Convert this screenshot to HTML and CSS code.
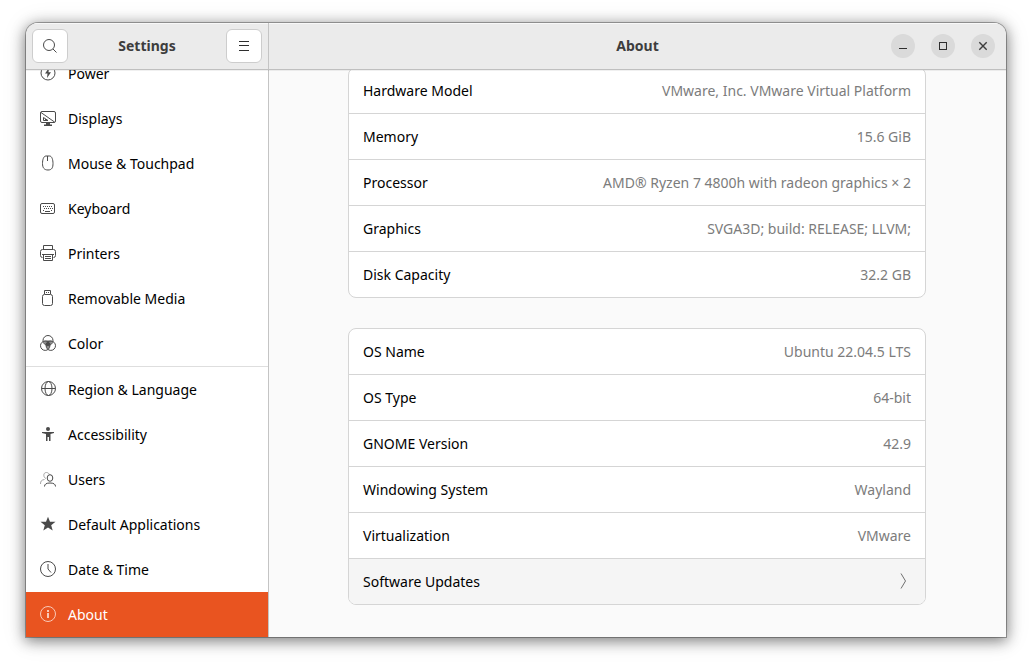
FILE: index.html
```html
<!DOCTYPE html>
<html lang="en">
<head>
<meta charset="utf-8">
<meta name="viewport" content="width=device-width, initial-scale=1">
<title>Settings – About</title>
<link rel="stylesheet" href="styles.css">
</head>
<body>
<div class="window">
  <header class="headerbar">
    <div class="headerbar-side">
      <button class="tool-button" type="button" aria-label="Search">
        <svg class="icon" viewBox="0 0 16 16"><circle cx="7" cy="7" r="5.500"/><path d="M11 11l3.500 3.500"/></svg>
      </button>
      <h2 class="title">Settings</h2>
      <button class="tool-button" type="button" aria-label="Menu">
        <svg class="icon crisp" viewBox="0 0 16 16"><path d="M3 3.500h10M3 7.500h10M3 12.500h10"/></svg>
      </button>
    </div>
    <div class="headerbar-main">
      <h1 class="title title-main">About</h1>
      <div class="window-controls">
        <button class="control" type="button" aria-label="Minimize">
          <svg class="icon crisp" viewBox="0 0 16 16"><path d="M4 10.500h8"/></svg>
        </button>
        <button class="control" type="button" aria-label="Maximize">
          <svg class="icon crisp" viewBox="0 0 16 16"><path d="M4.500 4.500h7v7h-7z"/></svg>
        </button>
        <button class="control" type="button" aria-label="Close">
          <svg class="icon close-icon" viewBox="0 0 16 16"><path d="M4.300 4.300l7.400 7.400M11.700 4.300l-7.400 7.400"/></svg>
        </button>
      </div>
    </div>
  </header>
  <div class="body">
    <nav class="sidebar" aria-label="Settings panels">
      <a class="nav-item" href="#power">
        <svg class="icon" viewBox="0 0 16 16"><circle cx="8" cy="8" r="7"/><path class="fill" d="M9 3L5 8.500h2.500L7 13l4-5.800H8.500z"/></svg>
        Power</a>
      <a class="nav-item" href="#displays">
        <svg class="icon" viewBox="0 0 16 16"><rect x=".5" y="1.500" width="15" height="11" rx="1.500"/><path d="M1 2.500l13.500 9.500M3.500 7.500v3h4.500zM5 9.500h1"/><path class="fill" d="M6 13h4v1.500h2V16H4v-1.500h2z"/></svg>
        Displays</a>
      <a class="nav-item" href="#mouse">
        <svg class="icon" viewBox="0 0 16 16"><path d="M6 1h3.500c2.500 0 3.500 4 3.500 7.500 0 4-1 6.500-5 6.500s-5.500-2.500-5.500-6.500C2.500 5 3.500 1 6 1zM7.500 1v5"/></svg>
        Mouse &amp; Touchpad</a>
      <a class="nav-item" href="#keyboard">
        <svg class="icon" viewBox="0 0 16 16"><rect x=".5" y="3.500" width="14" height="10" rx="1.500"/><path stroke-dasharray="1 1" d="M3 6.500h10M4 8.500h9"/><path d="M5 11.500h5M3 10.500h1M11 10.500h1"/></svg>
        Keyboard</a>
      <a class="nav-item" href="#printers">
        <svg class="icon" viewBox="0 0 16 16"><path d="M3.500 4V.5h9V4M2.500 12.500a2 2 0 0 1-2-2v-4a2 2 0 0 1 2-2h11a2 2 0 0 1 2 2v4a2 2 0 0 1-2 2M3.500 9.500v6h9v-6M2 9.500h12M5 11.500h6M5 13.500h6"/></svg>
        Printers</a>
      <a class="nav-item" href="#media">
        <svg class="icon" viewBox="0 0 16 16"><path d="M4.500 4V.5h6V4M6 2.500h1M8 2.500h1"/><rect x="2.500" y="4.500" width="10" height="11" rx="2"/></svg>
        Removable Media</a>
      <a class="nav-item" href="#color">
        <svg class="icon" viewBox="0 0 16 16"><path class="fill-soft" d="M3.500 6C6 5 10 5 12.500 6c-.5 2-1.500 3-2.500 4 .3 2-.8 3.300-2 4-1.200-.7-2.300-2-2-4-1-1-2-2-2.500-4z"/><path class="fill" d="M8 6l2.500 3L8 10.500 5.500 9z"/><circle cx="8" cy="5.500" r="5"/><circle cx="5.200" cy="10.700" r="4.700"/><circle cx="10.800" cy="10.700" r="4.700"/></svg>
        Color</a>
      <hr class="separator">
      <a class="nav-item" href="#region">
        <svg class="icon" viewBox="0 0 16 16"><circle cx="8.500" cy="7.500" r="7"/><ellipse cx="8.500" cy="7.500" rx="3.500" ry="7"/><path d="M1.500 7.500h14"/></svg>
        Region &amp; Language</a>
      <a class="nav-item" href="#accessibility">
        <svg class="icon" viewBox="0 0 16 16"><circle class="fill" cx="8" cy="3" r="2"/><path class="fill" d="M2 6h12v1l-3.500 1V15H9v-4H7.500v4H6V8L2 7z"/></svg>
        Accessibility</a>
      <a class="nav-item" href="#users">
        <svg class="icon" viewBox="0 0 16 16"><path class="faint" d="M6 7.500C3.500 7 2.500 1.500 6.500 1.500c1.500 0 2.500 1 2.800 2M.5 13c0-3 1-4 4-4.500"/><ellipse cx="10" cy="7" rx="2.800" ry="3.300"/><path d="M4.500 15.500c0-2.500 2-3.500 5.500-3.500s5.500 1 5.500 3.500"/></svg>
        Users</a>
      <a class="nav-item" href="#applications">
        <svg class="icon" viewBox="0 0 16 16"><path class="fill" d="M8 .8l2 5h5.500L11.200 9.200l1.500 5.300L8 11.400l-4.700 3.100 1.500-5.300L.5 5.800H6z"/></svg>
        Default Applications</a>
      <a class="nav-item" href="#datetime">
        <svg class="icon" viewBox="0 0 16 16"><circle cx="8" cy="8" r="7.500"/><path d="M8 3v5l3 3.500"/></svg>
        Date &amp; Time</a>
      <a class="nav-item selected" href="#about" aria-current="page">
        <svg class="icon" viewBox="0 0 16 16"><circle cx="8" cy="8" r="7.500"/><path class="fill" d="M7 4h2v2H7zM7 7h2v5H7z"/></svg>
        About</a>
    </nav>
    <main class="content">
      <dl class="card">
        <div class="row"><dt>Hardware Model</dt><dd>VMware, Inc. VMware Virtual Platform</dd></div>
        <div class="row"><dt>Memory</dt><dd>15.6 GiB</dd></div>
        <div class="row"><dt>Processor</dt><dd>AMD® Ryzen 7 4800h with radeon graphics × 2</dd></div>
        <div class="row"><dt>Graphics</dt><dd>SVGA3D; build: RELEASE; LLVM;</dd></div>
        <div class="row"><dt>Disk Capacity</dt><dd>32.2 GB</dd></div>
      </dl>
      <div class="card">
        <dl class="rows">
          <div class="row"><dt>OS Name</dt><dd>Ubuntu 22.04.5 LTS</dd></div>
          <div class="row"><dt>OS Type</dt><dd>64-bit</dd></div>
          <div class="row"><dt>GNOME Version</dt><dd>42.9</dd></div>
          <div class="row"><dt>Windowing System</dt><dd>Wayland</dd></div>
          <div class="row"><dt>Virtualization</dt><dd>VMware</dd></div>
        </dl>
        <button class="row row-button" type="button">Software Updates
          <svg class="icon chevron" viewBox="0 0 16 16"><path d="M6 .5l4.500 7.500L6 15.500"/></svg>
        </button>
      </div>
    </main>
  </div>
</div>
</body>
</html>
```
FILE: styles.css
```css
* {
  box-sizing: border-box;
}

body {
  margin: 0;
  height: 100vh;
  padding: 23px 26px 29px;
  display: flex;
  background: #fff;
  color: #000;
  font-family: "Noto Sans", "Open Sans", sans-serif;
  font-size: 14px;
  line-height: 20px;
}

button {
  font: inherit;
  color: inherit;
}

.window {
  flex: 1;
  min-width: 0;
  display: flex;
  flex-direction: column;
  overflow: hidden;
  border-radius: 12px 12px 0 0;
  background: #fafafa;
  box-shadow: 0 0 0 1px rgba(0, 0, 0, 0.3), 0 3px 14px 1px rgba(0, 0, 0, 0.46), 0 2px 24px 2px rgba(0, 0, 0, 0.1);
}

.icon {
  width: 16px;
  height: 16px;
  flex: none;
  display: block;
  overflow: visible;
  fill: none;
  stroke: #4a4a4a;
  stroke-width: 1;
}

.icon .fill {
  fill: #4a4a4a;
  stroke: none;
}

.icon .fill-soft {
  fill: #8a8a8a;
  stroke: none;
}

.icon .faint {
  stroke: #a4a4a4;
}

.crisp {
  shape-rendering: crispEdges;
  stroke: #2e2e2e;
}

.headerbar {
  flex: none;
  display: flex;
  height: 47px;
  background: #ebebeb;
  border-bottom: 1px solid #bfbfbf;
  box-shadow: inset 0 1px #f8f8f8, 0 1px rgba(0, 0, 0, 0.06);
  z-index: 1;
}

.headerbar-side {
  width: 243px;
  padding: 0 6px;
  display: flex;
  align-items: center;
  justify-content: space-between;
  border-right: 1px solid #c4c4c4;
}

.headerbar-main {
  flex: 1;
  padding: 0 11px;
  display: grid;
  grid-template-columns: 1fr auto 1fr;
  align-items: center;
}

.title {
  margin: 0;
  color: #3d3d3d;
  font-size: 14px;
  font-weight: 700;
}

.title-main {
  grid-column: 2;
}

.tool-button {
  width: 36px;
  height: 34px;
  padding: 0;
  display: grid;
  place-items: center;
  background: #fff;
  border: 1px solid #cdcdcd;
  border-radius: 6px;
}

.window-controls {
  display: flex;
  justify-content: flex-end;
  gap: 16px;
}

.control {
  width: 24px;
  height: 24px;
  padding: 0;
  display: grid;
  place-items: center;
  border: 0;
  border-radius: 50%;
  background: #dadada;
}

.close-icon {
  stroke: #3d3d3d;
  stroke-width: 1.4;
}

.body {
  flex: 1;
  min-height: 0;
  display: flex;
}

.sidebar {
  width: 243px;
  flex: none;
  display: flex;
  flex-direction: column;
  justify-content: flex-end;
  overflow: hidden;
  background: #fff;
  border-right: 1px solid #c4c4c4;
}

.nav-item {
  flex: none;
  height: 45px;
  padding: 0 14px;
  display: flex;
  align-items: center;
  gap: 12px;
  color: inherit;
  text-decoration: none;
}

.nav-item .icon,
.chevron {
  margin-bottom: 1px;
}

.nav-item.selected {
  background: #e95420;
  color: #fff;
}

.selected .icon {
  stroke: #f9c9b8;
}

.selected .icon .fill {
  fill: #f9c9b8;
}

.separator {
  flex: none;
  width: 100%;
  height: 1px;
  margin: 0;
  border: 0;
  background: #dedede;
}

.content {
  flex: 1;
  min-width: 0;
  padding: 0 25px 32px 24px;
  display: flex;
  flex-direction: column;
  align-items: center;
  justify-content: flex-end;
  gap: 30px;
  overflow: hidden;
}

.card {
  flex: none;
  width: 100%;
  max-width: 578px;
  margin: 0;
  overflow: hidden;
  background: #fff;
  border: 1px solid #d5d5d5;
  border-radius: 8px;
}

.rows {
  margin: 0;
}

.row {
  min-height: 45px;
  padding: 0 14px;
  display: flex;
  align-items: center;
  justify-content: space-between;
  gap: 16px;
}

.row + .row,
.row-button {
  min-height: 46px;
  border-top: 1px solid #d5d5d5;
}

.row dd {
  margin: 0;
  color: #7c7c7c;
  text-align: right;
}

.row-button {
  width: 100%;
  border: 0 solid #d5d5d5;
  border-top-width: 1px;
  background: #f5f5f5;
  text-align: left;
}

.chevron {
  stroke: #707070;
}
```
